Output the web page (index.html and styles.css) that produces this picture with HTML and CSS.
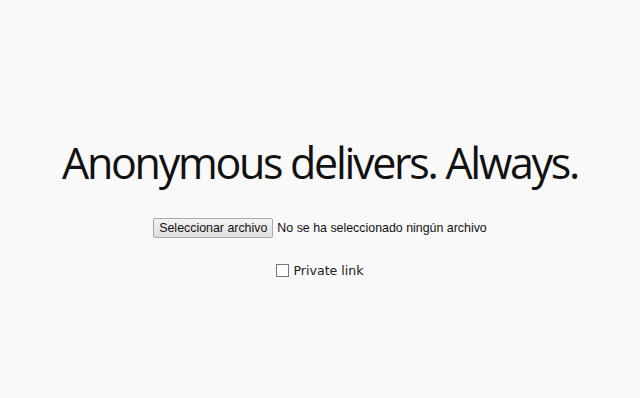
FILE: index.html
```html
<!DOCTYPE html>
<html lang="es">
<head>
<meta charset="utf-8">
<link rel="stylesheet" href="styles.css">
</head>
<body>
<main class="page">
  <h1 class="title">Anonymous delivers. Always.</h1>
  <div class="file-row">
    <span class="file-btn">Seleccionar archivo</span>
    <span class="file-label">No se ha seleccionado ningún archivo</span>
  </div>
  <label class="private">
    <span class="box"></span>
    <span class="private-text">Private link</span>
  </label>
</main>
</body>
</html>
```

FILE: styles.css
```css
html, body {
  margin: 0;
  padding: 0;
  background: #f9f9f9;
}
.page {
  width: 640px;
  height: 398px;
  display: flex;
  flex-direction: column;
  align-items: center;
  padding-top: 137px;
  box-sizing: border-box;
}
.title {
  margin: 0;
  font-family: "Open Sans", sans-serif;
  font-weight: 400;
  font-size: 43px;
  letter-spacing: -2.3px;
  line-height: 52px;
  color: #111;
}
.file-row {
  margin-top: 29px;
  display: flex;
  align-items: center;
  gap: 4px;
  font-family: "Liberation Sans", Arial, sans-serif;
  font-size: 12.4px;
  color: #111;
}
.file-btn {
  display: inline-block;
  padding: 2px 5px 2px;
  border: 1px solid #a9a9a9;
  border-radius: 2px;
  background: linear-gradient(#f4f4f4, #dedede);
  line-height: 14px;
}
.private {
  margin-top: 25px;
  display: flex;
  align-items: center;
  gap: 4px;
  font-family: "DejaVu Sans", sans-serif;
  font-size: 12.6px;
  color: #222;
}
.box {
  width: 11px;
  height: 11px;
  border: 1px solid #777;
  background: #fff;
}
```
